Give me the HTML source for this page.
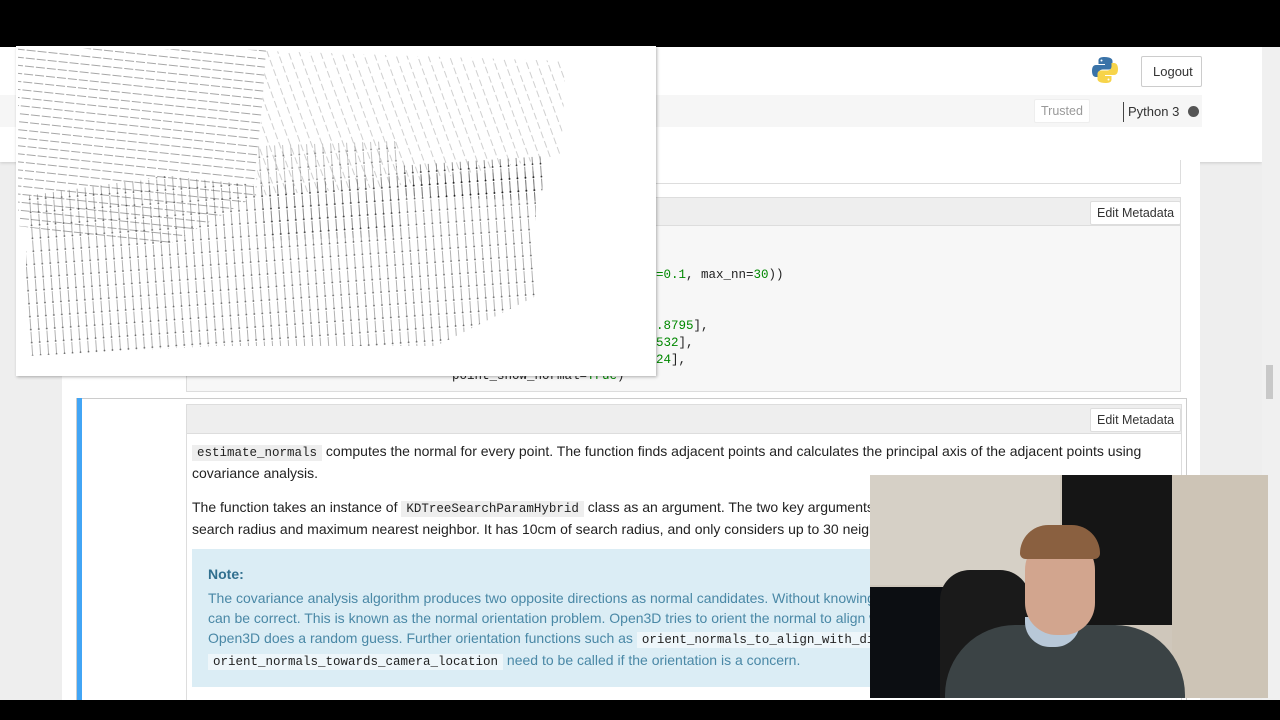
<!DOCTYPE html>
<html><head><meta charset="utf-8"><style>
*{margin:0;padding:0;box-sizing:border-box}
body{width:1280px;height:720px;overflow:hidden;background:#000;font-family:"Liberation Sans",Arial,sans-serif;position:relative}
.abs{position:absolute}
.mono{font-family:"Liberation Mono","DejaVu Sans Mono",monospace}
.btn{position:absolute;background:#fff;border:1px solid #ddd;font-size:12.5px;color:#333;padding:4px 6px;border-radius:2px}
p{font-size:14px;color:#222;line-height:20px;white-space:nowrap}
code{font-family:"Liberation Mono",monospace;font-size:12.5px;background:#eee;padding:1px 5px;color:#222}
</style></head><body>
<div class="abs" style="left:0;top:47px;width:1280px;height:653px;background:#eee"></div>
<div class="abs" style="left:0;top:47px;width:1262px;height:115px;background:#fff;box-shadow:0 1px 3px rgba(0,0,0,.15)"></div>
<div class="abs" style="left:0;top:95px;width:1202px;height:32px;background:#f6f6f6"></div>
<div class="abs" style="left:1262px;top:47px;width:18px;height:653px;background:#f0f0f0"></div>
<div class="abs" style="left:1266px;top:365px;width:7px;height:34px;background:#c8c8c8"></div>
<svg class="abs" style="left:1091px;top:56px" width="28" height="28" viewBox="0 0 28 28">
<path d="M13.5 1c-6 0-6 2.5-6 4v3h6.5v1H5C2 9 1 11.5 1 15s1.2 6 4 6h2.5v-3.5c0-2.2 2-4 4-4h6.5c2 0 3.5-1.6 3.5-3.5V5c0-2-2-4-8-4z" fill="#3a73a8"/>
<path d="M14.5 27c6 0 6-2.5 6-4v-3H14v-1h9c3 0 4-2.5 4-6s-1.2-6-4-6h-2.5v3.5c0 2.2-2 4-4 4H10c-2 0-3.5 1.6-3.5 3.5V23c0 2 2 4 8 4z" fill="#f7d44a"/>
<circle cx="10.5" cy="4.5" r="1" fill="#fff"/><circle cx="17.5" cy="23.5" r="1" fill="#fff"/></svg>
<div class="btn" style="left:1141px;top:56px;width:61px;height:31px;font-size:13px;padding:7px 11px;border-color:#ccc">Logout</div>
<div class="btn" style="left:1034px;top:99px;font-size:12.5px;color:#999;border-color:#eee;padding:4px 6px">Trusted</div>
<div class="abs" style="left:1123px;top:102px;width:1px;height:20px;background:#444"></div>
<div class="abs" style="left:1128px;top:104px;font-size:13px;color:#333">Python 3</div>
<div class="abs" style="left:1188px;top:106px;width:11px;height:11px;border-radius:50%;background:#555"></div>
<div class="abs" style="left:62px;top:162px;width:1138px;height:538px;background:#fff"></div>
<div class="abs" style="left:186px;top:160px;width:995px;height:24px;border:1px solid #ddd;border-top:none;background:#fff"></div>
<div class="abs" style="left:186px;top:197px;width:995px;height:195px;border:1px solid #ddd;background:#f7f7f7"></div>
<div class="abs" style="left:187px;top:198px;width:993px;height:28px;background:#eee;border-bottom:1px solid #ddd"></div>
<div class="btn" style="left:1090px;top:201px">Edit Metadata</div>
<div class="abs mono" style="left:656px;top:267px;font-size:12.5px;line-height:17px;color:#222;white-space:pre"><span style="color:#080">=0.1</span>, max_nn=<span style="color:#080">30</span>))</div>
<div class="abs mono" style="left:656px;top:318px;font-size:12.5px;line-height:17px;color:#222;white-space:pre"><span style="color:#080">.8795</span>],
<span style="color:#080">532</span>],
<span style="color:#080">24</span>],</div>
<div class="abs mono" style="left:452px;top:369px;font-size:12.5px;color:#222">point_show_normal=<span style="color:#080">True</span>)</div>
<div class="abs" style="left:76px;top:398px;width:1111px;height:302px;border:1px solid #ccc;border-bottom:none"></div>
<div class="abs" style="left:77px;top:398px;width:5px;height:302px;background:#42a5f5"></div>
<div class="abs" style="left:186px;top:404px;width:996px;height:296px;border:1px solid #ddd;border-bottom:none;background:#fff"></div>
<div class="abs" style="left:187px;top:405px;width:994px;height:29px;background:#eee;border-bottom:1px solid #ddd"></div>
<div class="btn" style="left:1090px;top:408px">Edit Metadata</div>
<div class="abs" style="left:192px;top:441px;width:975px">
<p><code>estimate_normals</code> computes the normal for every point. The function finds adjacent points and calculates the principal axis of the adjacent points using<br>covariance analysis.</p>
<p style="margin-top:14px">The function takes an instance of <code>KDTreeSearchParamHybrid</code> class as an argument. The two key arguments radius = 0.1 and max_nn = 30 specifies<br>search radius and maximum nearest neighbor. It has 10cm of search radius, and only considers up to 30 neighbors to save computation time.</p>
</div>
<div class="abs" style="left:192px;top:549px;width:985px;height:138px;background:#dbedf5;padding:17px 16px;white-space:nowrap">
<div style="font-size:14px;font-weight:bold;color:#31708f">Note:</div>
<div style="font-size:14px;line-height:20px;color:#4a88a6;margin-top:6px">The covariance analysis algorithm produces two opposite directions as normal candidates. Without knowing the global structure of the geometry, both<br>can be correct. This is known as the normal orientation problem. Open3D tries to orient the normal to align with the original normal if it exists. Otherwise,<br>Open3D does a random guess. Further orientation functions such as <code style="background:#eef6fa">orient_normals_to_align_with_direction</code> and<br><code style="background:#eef6fa">orient_normals_towards_camera_location</code> need to be called if the orientation is a concern.</div>
</div>
<div class="abs" style="left:16px;top:46px;width:640px;height:330px;background:#fff;box-shadow:1px 1px 3px rgba(0,0,0,.3)">
<svg width="640" height="330">
<defs>
<pattern id="h" width="11" height="8" patternUnits="userSpaceOnUse" patternTransform="rotate(6)"><line x1="0" y1="3" x2="9" y2="3" stroke="#444" stroke-width="0.8"/></pattern>
<pattern id="v" width="8" height="13" patternUnits="userSpaceOnUse" patternTransform="rotate(-4)"><line x1="3" y1="0" x2="3" y2="11" stroke="#555" stroke-width="0.7"/><circle cx="3" cy="11" r="0.9" fill="#111"/></pattern>
<pattern id="l" width="10" height="10" patternUnits="userSpaceOnUse" patternTransform="rotate(-20)"><line x1="4" y1="0" x2="4" y2="7" stroke="#aaa" stroke-width="0.7"/></pattern>
</defs>
<polygon points="2,2 250,4 240,150 150,200 2,180" fill="url(#h)" opacity="0.6"/>
<polygon points="250,5 550,15 545,110 380,140 240,150" fill="url(#l)" opacity="0.8"/>
<polygon points="10,150 150,130 250,140 380,130 520,125 520,250 420,300 200,300 10,310" fill="url(#v)" opacity="0.65"/>
<polygon points="380,120 530,110 525,155 390,150" fill="url(#v)" opacity="0.9"/>
<polygon points="240,100 380,95 385,190 250,195" fill="url(#v)" opacity="0.5"/>
</svg></div>
<div class="abs" style="left:870px;top:475px;width:398px;height:223px;background:#cfc7bb;overflow:hidden">
<div class="abs" style="left:0;top:0;width:190px;height:110px;background:#d6d0c6"></div>
<div class="abs" style="left:192px;top:0;width:110px;height:150px;background:#151515"></div>
<div class="abs" style="left:302px;top:0;width:96px;height:223px;background:#cdc4b6"></div>
<div class="abs" style="left:0;top:112px;width:110px;height:111px;background:#0c0e12"></div>
<div class="abs" style="left:70px;top:95px;width:90px;height:128px;background:#1a1a1a;border-radius:30px 30px 0 0"></div>
<div class="abs" style="left:75px;top:150px;width:240px;height:100px;background:#3b4345;border-radius:70px 70px 0 0"></div>
<div class="abs" style="left:155px;top:142px;width:55px;height:30px;background:#b8c8d8;border-radius:0 0 25px 25px"></div>
<div class="abs" style="left:155px;top:60px;width:70px;height:100px;background:#d2a58e;border-radius:35px 35px 32px 32px"></div>
<div class="abs" style="left:150px;top:50px;width:80px;height:34px;background:#8a6040;border-radius:40px 40px 8px 8px"></div>
</div>
<div class="abs" style="left:0;top:700px;width:1280px;height:20px;background:#000"></div>
</body></html>
